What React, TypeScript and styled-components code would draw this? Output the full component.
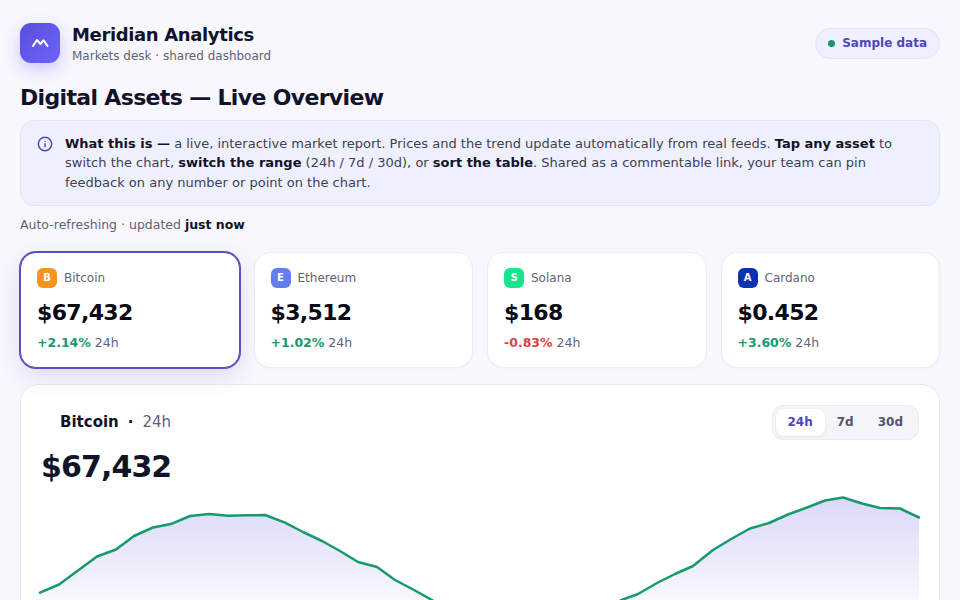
import React from "react";
import styled, { createGlobalStyle } from "styled-components";

const Global = createGlobalStyle`
  html, body { margin: 0; padding: 0; background: #f7f7fd; overflow: hidden; }
  body { font-family: "DejaVu Sans", sans-serif; color: #11132a; }
  * { box-sizing: border-box; }
`;

const Page = styled.div`
  padding: 23px 20px 20px;
  height: 600px;
  overflow: hidden;
`;

const Header = styled.header`
  display: flex;
  align-items: center;
  justify-content: space-between;
`;

const Brand = styled.div`
  display: flex;
  align-items: center;
  gap: 12px;
`;

const Logo = styled.div`
  width: 40px;
  height: 40px;
  border-radius: 11px;
  background: linear-gradient(135deg, #5a4fd8, #6c63ff);
  box-shadow: 0 6px 16px rgba(91, 80, 230, 0.28);
  display: flex;
  align-items: center;
  justify-content: center;
`;

const BrandName = styled.div`
  font-size: 18px;
  font-weight: 700;
  line-height: 24px;
  letter-spacing: -0.02em;
  color: #11132a;
`;

const BrandSub = styled.div`
  font-size: 12px;
  line-height: 14px;
  margin-top: 2px;
  color: #5f6376;
`;

const Pill = styled.div`
  display: flex;
  align-items: center;
  gap: 7px;
  height: 31px;
  padding: 0 12px;
  border: 1px solid #e3e3f5;
  border-radius: 999px;
  background: #eff0fd;
  font-size: 12px;
  font-weight: 700;
  color: #4f46b8;
`;

const Dot = styled.span`
  width: 7px;
  height: 7px;
  border-radius: 50%;
  background: #159a6e;
`;

const Title = styled.h1`
  margin: 21px 0 0;
  font-size: 22px;
  line-height: 28px;
  font-weight: 700;
  letter-spacing: -0.03em;
  color: #11132a;
`;

const Info = styled.div`
  margin-top: 8px;
  display: flex;
  gap: 12px;
  padding: 12.75px 16px 12.25px;
  border: 1px solid #e3e4f6;
  border-radius: 14px;
  background: #eff0fd;
  font-size: 13px;
  line-height: 19.5px;
  color: #3d4156;
  b { color: #11132a; font-weight: 700; }
`;

const InfoIcon = styled.svg`
  flex: none;
  width: 16px;
  height: 16px;
  margin-top: 2px;
  color: #4f46b8;
`;

const Meta = styled.div`
  margin-top: 10px;
  font-size: 12.5px;
  line-height: 17px;
  color: #5f6376;
  b { color: #11132a; font-weight: 700; }
`;

const Cards = styled.div`
  margin-top: 19px;
  display: grid;
  grid-template-columns: repeat(4, 1fr);
  gap: 14px;
`;

const Card = styled.div<{ $active?: boolean }>`
  height: 116px;
  padding: 15px 16px;
  border-radius: 16px;
  background: #fff;
  border: 1px solid ${(p) => (p.$active ? "#5a4fc0" : "#ebebf5")};
  box-shadow: ${(p) =>
    p.$active
      ? "0 0 0 1px #5a4fc0, 0 8px 22px rgba(90, 79, 200, 0.16)"
      : "0 1px 2px rgba(20, 20, 60, 0.02)"};
`;

const CardHead = styled.div`
  display: flex;
  align-items: center;
  gap: 7px;
  font-size: 12px;
  line-height: 20px;
  color: #5f6376;
`;

const Badge = styled.span<{ $bg: string }>`
  width: 20px;
  height: 20px;
  border-radius: 6px;
  background: ${(p) => p.$bg};
  color: #fff;
  font-size: 10px;
  font-weight: 700;
  display: flex;
  align-items: center;
  justify-content: center;
`;

const CardValue = styled.div`
  margin-top: 11px;
  font-size: 22px;
  line-height: 28px;
  font-weight: 700;
  letter-spacing: -0.03em;
  color: #0a0a14;
`;

const CardChange = styled.div`
  margin-top: 8px;
  font-size: 12.5px;
  line-height: 16px;
  color: #5f6376;
`;

const Delta = styled.b<{ $down?: boolean }>`
  color: ${(p) => (p.$down ? "#dc4444" : "#159a6e")};
`;

const ChartCard = styled.section`
  margin-top: 16px;
  height: 260px;
  padding: 20px 20px 0;
  border-radius: 18px;
  border: 1px solid #e9e9f4;
  background: #fff;
`;

const ChartTop = styled.div`
  display: flex;
  justify-content: space-between;
  align-items: flex-start;
`;

const ChartLabel = styled.div`
  padding: 7px 0 0 19px;
  font-size: 15px;
  line-height: 20px;
  color: #5f6376;
  b { color: #11132a; font-weight: 700; }
  i { font-style: normal; color: #11132a; margin: 0 9px; font-weight: 700; }
`;

const Segment = styled.div`
  display: flex;
  height: 35px;
  padding: 3px;
  border: 1px solid #ebebf4;
  border-radius: 11px;
  background: #f4f4f9;
`;

const SegButton = styled.button<{ $active?: boolean }>`
  border: 0;
  padding: 0 12px;
  border-radius: 8px;
  font-family: inherit;
  font-size: 12px;
  font-weight: 700;
  background: ${(p) => (p.$active ? "#fff" : "transparent")};
  color: ${(p) => (p.$active ? "#4f46b8" : "#52566c")};
  box-shadow: ${(p) => (p.$active ? "0 1px 3px rgba(20,20,60,.08)" : "none")};
`;

const BigValue = styled.div`
  margin: 8px 0 0 0;
  font-size: 30px;
  line-height: 38px;
  font-weight: 700;
  letter-spacing: -0.03em;
  color: #11132a;
`;

const ChartSvg = styled.svg`
  display: block;
  margin: 9px 0 0 -1px;
  width: 880px;
  height: 180px;
  overflow: visible;
`;

const assets = [
  { name: "Bitcoin", letter: "B", color: "#f39425", value: "$67,432", delta: "+2.14%", active: true },
  { name: "Ethereum", letter: "E", color: "#627eea", value: "$3,512", delta: "+1.02%" },
  { name: "Solana", letter: "S", color: "#14e58f", value: "$168", delta: "-0.83%", down: true },
  { name: "Cardano", letter: "A", color: "#0a33ad", value: "$0.452", delta: "+3.60%" },
];

// x, y in page pixels; converted below to the chart's own origin (40, 495)
const pts: [number, number][] = [
  [40, 592.7], [59, 584.5], [78, 570.5], [97, 556.5], [116, 549.5], [134, 536], [153, 527.5], [172, 523.7],
  [190, 516], [209, 514], [228, 515.7], [247, 515.3], [265, 515], [285, 522.7], [303, 532], [322, 541],
  [340, 551], [358, 562], [377, 567], [395, 580], [414, 590], [432, 600], [450, 611], [470, 620], [490, 628],
  [510, 634], [530, 638], [550, 637], [570, 628], [590, 617], [608, 606], [623, 599.5], [638, 594], [657, 583],
  [675, 574], [693, 566], [713, 550], [732, 538.5], [750, 528.5], [769, 523], [788, 514.5], [807, 507.5],
  [825, 500.5], [843, 497.5], [862, 503.5], [880, 508], [900, 508.5], [919, 517.5],
];
const shifted = pts.map(([x, y]) => `${x - 40},${(y - 495).toFixed(1)}`);
const line = `M${shifted.join(" L")}`;
const area = `${line} L879,180 L0,180 Z`;

export default function App() {
  return (
    <Page>
      <Global />
      <Header>
        <Brand>
          <Logo>
            <svg width="18" height="18" viewBox="0 0 18 18" fill="none" stroke="#fff" strokeWidth="2" strokeLinecap="round" strokeLinejoin="round">
              <path d="M2 12 L6 6 L9.5 10 L12.5 6.3 L16.5 12" />
            </svg>
          </Logo>
          <div>
            <BrandName>Meridian Analytics</BrandName>
            <BrandSub>Markets desk · shared dashboard</BrandSub>
          </div>
        </Brand>
        <Pill>
          <Dot />
          Sample data
        </Pill>
      </Header>
      <Title>Digital Assets — Live Overview</Title>
      <Info>
        <InfoIcon viewBox="0 0 24 24" fill="none" stroke="currentColor" strokeWidth="2.2" strokeLinecap="round">
          <circle cx="12" cy="12" r="10" />
          <path d="M12 16v-4.5M12 8h.01" />
        </InfoIcon>
        <div>
          <b>What this is —</b> a live, interactive market report. Prices and the trend update automatically from real feeds. <b>Tap any asset</b> to switch the chart, <b>switch the range</b> (24h / 7d / 30d), or <b>sort the table</b>. Shared as a commentable link, your team can pin feedback on any number or point on the chart.
        </div>
      </Info>
      <Meta>
        Auto-refreshing · updated <b>just now</b>
      </Meta>
      <Cards>
        {assets.map((a) => (
          <Card key={a.name} $active={a.active}>
            <CardHead>
              <Badge $bg={a.color}>{a.letter}</Badge>
              {a.name}
            </CardHead>
            <CardValue>{a.value}</CardValue>
            <CardChange>
              <Delta $down={a.down}>{a.delta}</Delta> 24h
            </CardChange>
          </Card>
        ))}
      </Cards>
      <ChartCard>
        <ChartTop>
          <ChartLabel>
            <b>Bitcoin</b>
            <i>·</i>24h
          </ChartLabel>
          <Segment>
            <SegButton $active>24h</SegButton>
            <SegButton>7d</SegButton>
            <SegButton>30d</SegButton>
          </Segment>
        </ChartTop>
        <BigValue>$67,432</BigValue>
        <ChartSvg viewBox="0 0 880 180">
          <defs>
            <linearGradient id="fill" x1="0" y1="0" x2="0" y2="1">
              <stop offset="0" stopColor="#5a4fe0" stopOpacity="0.22" />
              <stop offset="0.62" stopColor="#5a4fe0" stopOpacity="0.03" />
              <stop offset="1" stopColor="#5a4fe0" stopOpacity="0" />
            </linearGradient>
          </defs>
          <path d={area} fill="url(#fill)" />
          <path d={line} fill="none" stroke="#159a6e" strokeWidth="2.5" strokeLinejoin="round" strokeLinecap="round" />
        </ChartSvg>
      </ChartCard>
    </Page>
  );
}
